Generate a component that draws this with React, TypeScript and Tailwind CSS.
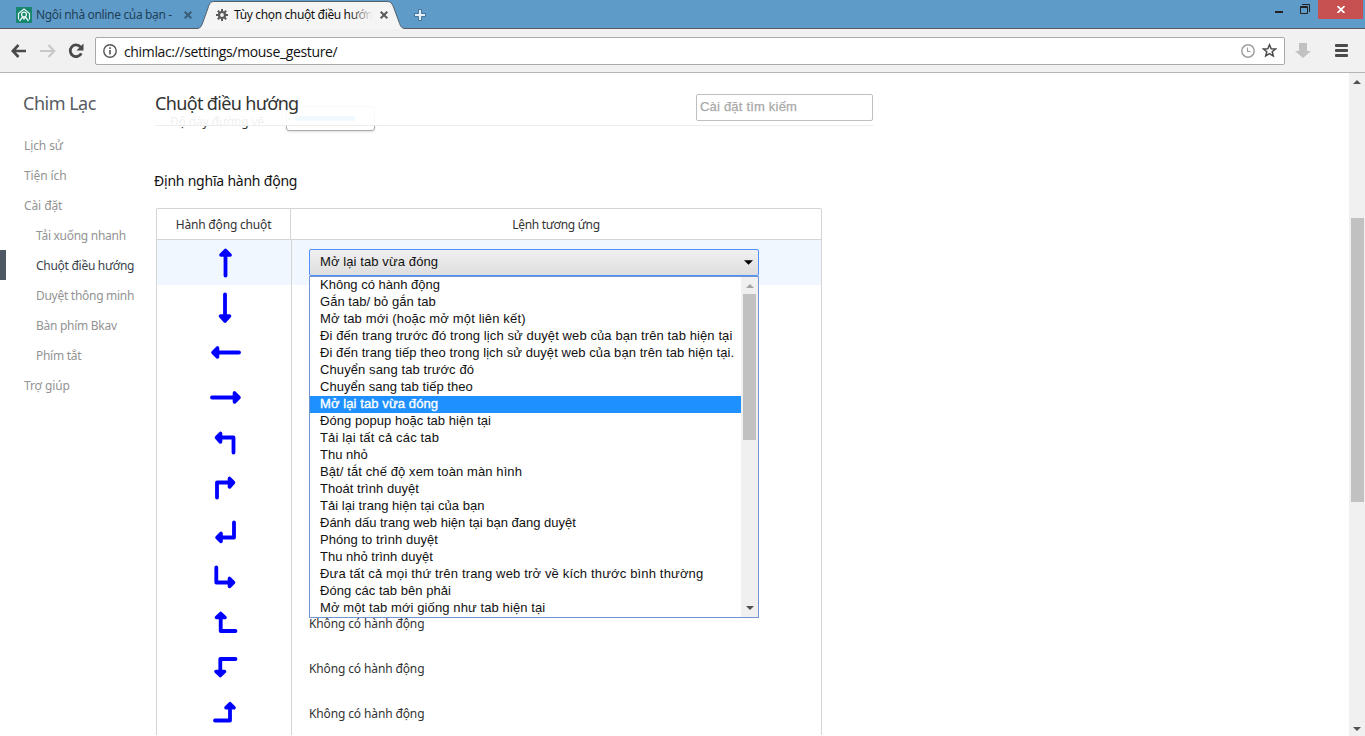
import React from "react";
import clsx from "clsx";

const menuItems = [
  { label: "Lịch sử" },
  { label: "Tiện ích" },
  { label: "Cài đặt" },
  { label: "Tải xuống nhanh", sub: true },
  { label: "Chuột điều hướng", sub: true, active: true },
  { label: "Duyệt thông minh", sub: true },
  { label: "Bàn phím Bkav", sub: true },
  { label: "Phím tắt", sub: true },
  { label: "Trợ giúp" },
];

const commands = [
  { label: "Không có hành động", tracking: "tracking-[0px]" },
  { label: "Gắn tab/ bỏ gắn tab", tracking: "tracking-[0.04px]" },
  { label: "Mở tab mới (hoặc mở một liên kết)", tracking: "tracking-[0.16px]" },
  { label: "Đi đến trang trước đó trong lịch sử duyệt web của bạn trên tab hiện tại", tracking: "tracking-[0.1px]" },
  { label: "Đi đến trang tiếp theo trong lịch sử duyệt web của bạn trên tab hiện tại.", tracking: "tracking-[0.07px]" },
  { label: "Chuyển sang tab trước đó", tracking: "tracking-[0.1px]" },
  { label: "Chuyển sang tab tiếp theo", tracking: "tracking-[0.04px]" },
  { label: "Mở lại tab vừa đóng", tracking: "tracking-[0.1px]" },
  { label: "Đóng popup hoặc tab hiện tại", tracking: "tracking-[0.04px]" },
  { label: "Tải lại tất cả các tab", tracking: "tracking-[0.16px]" },
  { label: "Thu nhỏ", tracking: "tracking-[0px]" },
  { label: "Bật/ tắt chế độ xem toàn màn hình", tracking: "tracking-[0.1px]" },
  { label: "Thoát trình duyệt", tracking: "tracking-[0.04px]" },
  { label: "Tải lại trang hiện tại của bạn", tracking: "tracking-[0.04px]" },
  { label: "Đánh dấu trang web hiện tại bạn đang duyệt", tracking: "tracking-[0px]" },
  { label: "Phóng to trình duyệt", tracking: "tracking-[0.04px]" },
  { label: "Thu nhỏ trình duyệt", tracking: "tracking-[0px]" },
  { label: "Đưa tất cả mọi thứ trên trang web trở về kích thước bình thường", tracking: "tracking-[0.16px]" },
  { label: "Đóng các tab bên phải", tracking: "tracking-[0.04px]" },
  { label: "Mở một tab mới giống như tab hiện tại", tracking: "tracking-[0.1px]" },
];

// line = gesture path, head = arrow head at its end
const gestures = [
  { line: "M68.5 35.5V13", head: "M68.5 10.5L73 15H64Z" },
  { line: "M68 9.5V33", head: "M68 36L63.5 31H72.5Z" },
  { line: "M82 22.5H57", head: "M56 22.5L60.5 18V27Z" },
  { line: "M55 22.5H81", head: "M82 22.5L77.5 18V27Z" },
  { line: "M76.5 32.5V17.5H61", head: "M59.5 17.5L63.5 13.5V22Z" },
  { line: "M60 32.5V17.5H75", head: "M76.5 17.5L72.5 13.5V22Z" },
  { line: "M77 12.5V27.5H62", head: "M60 27.5L64 23.5V31.5Z" },
  { line: "M59.3 12.5V27.5H75", head: "M76.5 27.5L72.5 23.5V31.5Z" },
  { line: "M78.5 31H63.7V16", head: "M63.7 13.5L68 17.5H59.5Z", label: "Không có hành động" },
  { line: "M78.5 14H63.3V28", head: "M63.3 30.5L59 26.5H67.5Z", label: "Không có hành động" },
  { line: "M58 30.5H73V16", head: "M73 13.7L77 17.7H69Z", label: "Không có hành động" },
];

function Triangle({ up, className }: { up?: boolean; className?: string }) {
  return (
    <svg width="8" height="4" viewBox="0 0 8 4" className={className} fill="currentColor">
      <path d={up ? "M0 4L4 0L8 4Z" : "M0 0H8L4 4Z"} />
    </svg>
  );
}

function CloseIcon({ className }: { className?: string }) {
  return (
    <svg width="8" height="8" viewBox="0 0 8 8" className={className} stroke="currentColor" strokeWidth="2">
      <path d="M0.7 0.7L7.3 7.3M7.3 0.7L0.7 7.3" />
    </svg>
  );
}

function TabStrip() {
  return (
    <div className="relative flex h-[29px] items-start border-b border-[#555a5e] bg-[#5e9bc8]">
      <div className="flex h-[29px] w-[200px] items-center pl-4">
        <svg width="16" height="16" viewBox="0 0 16 16" className="mt-px shrink-0" fill="none">
          <rect width="16" height="16" rx="1" fill="#17866f" />
          <path d="M2.500 12.500V6.500L8 2L13.500 6.500V12.500" stroke="#e4f5ef" strokeWidth="1.200" />
          <circle cx="8" cy="7.500" r="2.400" stroke="#e4f5ef" strokeWidth="1.300" />
          <path d="M3.500 14L6.500 10L8 12L9.500 10L12.500 14" stroke="#e4f5ef" strokeWidth="1.300" />
        </svg>
        <span className="ml-1 w-[142px] pt-px text-[12px] tracking-[-0.34px] whitespace-nowrap text-[#1f3f58]">
          Ngôi nhà online của bạn -
        </span>
        <CloseIcon className="ml-[6px] shrink-0 text-[#3a5d78]" />
      </div>
      <div className="relative -ml-[3px] flex h-[29px] w-[210px] items-center pl-[19px]">
        <svg width="210" height="28" viewBox="0 0 210 28" className="absolute top-px left-0">
          <path d="M0 28C4 27 4.500 25 6 21L11 7C12.500 2.500 13.500 .5 17 .5H190C194 .5 195 2.500 196.500 6L202 21C203.500 25 204 27 208 28Z" fill="#f5f5f5" />
          <path d="M0 27.500C4 27 4.500 25 6 21L11 7C12.500 2.500 13.500 .5 17 .5H190C194 .5 195 2.500 196.500 6L202 21C203.500 25 204 27 208 27.500" fill="none" stroke="#54616b" />
        </svg>
        <svg width="12" height="12" viewBox="0 0 12 12" className="relative mt-px shrink-0" fill="none" stroke="#5a5a5a">
          <circle cx="6" cy="6" r="3" strokeWidth="2.200" />
          <path d="M6 0V2.200M6 9.800V12M0 6H2.200M9.800 6H12M1.800 1.800L3.300 3.300M8.700 8.700L10.200 10.200M1.800 10.200L3.300 8.700M8.700 3.300L10.200 1.800" strokeWidth="2" />
        </svg>
        <span className="relative ml-[6px] w-[139px] pt-px text-[12px] tracking-[-0.36px] whitespace-nowrap text-[#111]">
          Tùy chọn chuột điều hướn
          <span className="absolute top-0 right-0 h-full w-6 bg-gradient-to-r from-transparent to-[#f5f5f5]" />
        </span>
        <CloseIcon className="relative ml-[7px] shrink-0 text-[#5a5a5a]" />
      </div>
      <svg width="12" height="12" viewBox="0 0 12 12" className="mt-[9px] ml-[7px]">
        <path d="M4.500 .5H7.500V4.500H11.500V7.500H7.500V11.500H4.500V7.500H.5V4.500H4.500Z" fill="#e4eef6" stroke="#43759b" />
      </svg>
      <div className="ml-auto flex">
        <span className="mt-[11px] mr-[17px] h-[2px] w-2 bg-[#222]" />
        <svg width="10" height="10" viewBox="0 0 10 10" className="mt-1 mr-2" fill="none" stroke="#222">
          <path d="M.5 2.500H7.500V9.500H.5ZM0 3.500H8M2 .5H9.500V8" />
        </svg>
        <div className="mr-[2px] flex h-[19px] w-[45px] items-center justify-center bg-[#c75050]">
          <svg width="8" height="7" viewBox="0 0 8 7" stroke="#fff" strokeWidth="1.800">
            <path d="M.5 0L7.500 7M7.500 0L.5 7" />
          </svg>
        </div>
      </div>
    </div>
  );
}

function Toolbar() {
  return (
    <div className="flex h-[44px] items-center border-b border-[#b5b5b5] bg-[#f1f1f1]">
      <svg width="16" height="14" viewBox="0 0 16 14" className="ml-[11px]" fill="none" stroke="#4a4a4a" strokeWidth="2.600">
        <path d="M15 7H2M7.500 1L1.800 7L7.500 13" />
      </svg>
      <svg width="16" height="14" viewBox="0 0 16 14" className="ml-[13px]" fill="none" stroke="#c8c8c8" strokeWidth="2.200">
        <path d="M0 7H14M8.500 1L14.200 7L8.500 13" />
      </svg>
      <svg width="16" height="16" viewBox="0 0 16 16" className="ml-[12px]" fill="none" stroke="#4a4a4a" strokeWidth="2.800">
        <path d="M12.500 4A5.800 5.800 0 1 0 13.300 10.300" />
        <path d="M15.500 .5V7.500H8.500Z" fill="#4a4a4a" stroke="none" />
      </svg>
      <div className="ml-[11px] flex h-7 w-[1190px] items-center rounded-[2px] border border-[#a9a9a9] bg-white">
        <svg width="14" height="14" viewBox="0 0 14 14" className="ml-[7px]" fill="none" stroke="#555" strokeWidth="1.400">
          <circle cx="7" cy="7" r="6.200" />
          <path d="M7 6V10.500M7 3.300V4.900" strokeWidth="1.600" />
        </svg>
        <span className="ml-[7px] pt-px font-['Open_Sans','Noto_Sans',sans-serif] text-[14px] tracking-[-0.35px] text-[#111]">
          chimlac://settings/mouse_gesture/
        </span>
        <svg width="14" height="14" viewBox="0 0 14 14" className="mr-[7px] ml-auto" fill="none" stroke="#a0a0a0" strokeWidth="1.500">
          <circle cx="7" cy="7" r="6.200" />
          <path d="M6.500 3.500V7.500H9.500" strokeWidth="1.200" />
        </svg>
        <svg width="15" height="15" viewBox="0 0 15 15" className="mr-[7px]" fill="none" stroke="#4a4a4a" strokeWidth="1.500">
          <path d="M7.500 1.800L9.200 5.700L13.500 6L10.200 8.800L11.300 13L7.500 10.700L3.700 13L4.800 8.800L1.500 6L5.800 5.700Z" />
        </svg>
      </div>
      <svg width="16" height="15" viewBox="0 0 16 15" className="ml-[10px]" fill="#c1c1c1">
        <path d="M4 0H12V8H16L8 15L0 8H4Z" />
      </svg>
      <div className="ml-6 flex w-[13px] flex-col gap-[2px]">
        <span className="h-[3px] rounded-[1px] bg-[#4a4a4a]" />
        <span className="h-[3px] rounded-[1px] bg-[#4a4a4a]" />
        <span className="h-[3px] rounded-[1px] bg-[#4a4a4a]" />
      </div>
    </div>
  );
}

function Sidebar() {
  return (
    <aside className="w-[154px] shrink-0">
      <h1 className="h-[57px] pt-4 pl-[23px] text-[18px] leading-7 tracking-[-0.5px] text-[#555b61]">Chim Lạc</h1>
      <ul className="text-[12px] text-[#939393]">
        {menuItems.map((item) => (
          <li
            key={item.label}
            className={clsx(
              "flex h-[30px] items-center border-l-[6px] pt-[2px] whitespace-nowrap",
              item.sub ? "pl-[30px] tracking-[-0.28px]" : "pl-[18px] tracking-[-0.1px]",
              item.active ? "border-[#4e5764] text-[#39424b]" : "border-transparent"
            )}
          >
            {item.label}
          </li>
        ))}
      </ul>
    </aside>
  );
}

function CommandSelect() {
  return (
    <div className="relative w-[450px] font-['Liberation_Sans',Arial,sans-serif] text-[13px] text-[#111]">
      <div className="flex h-[27px] items-center justify-between rounded-[2px] border border-[#4d90fe] bg-gradient-to-b from-[#f0f0f0] to-[#dedede] pr-[5px] pb-px pl-[10px]">
        <span className="tracking-[0.1px]">Mở lại tab vừa đóng</span>
        <Triangle className="mt-px h-[5px] w-[9px] text-black" />
      </div>
      <div className="absolute top-[27px] left-0 z-10 flex w-[450px] border border-[#7295d0] bg-white">
        <ul className="h-[340px] flex-1 overflow-hidden">
          {commands.map((command, index) => (
            <li
              key={command.label}
              className={clsx(
                "h-[17px] pl-[10px] leading-[15px] whitespace-nowrap",
                command.tracking,
                index === 7 && "bg-[#1e90ff] text-white [-webkit-text-stroke:0.35px]"
              )}
            >
              {command.label}
            </li>
          ))}
        </ul>
        <div className="flex w-[17px] flex-col items-center bg-[#f0f0f0]">
          <Triangle up className="mt-[7px] mb-[6px] text-[#a3a3a3]" />
          <span className="h-[146px] w-[13px] bg-[#c1c1c1]" />
          <Triangle className="mt-auto mb-[7px] text-[#505050]" />
        </div>
      </div>
    </div>
  );
}

function GestureTable() {
  return (
    <div className="ml-[2px] w-[666px] rounded-t-[2px] border border-b-0 border-[#d5d5d5] text-[12px] text-[#333]">
      <div className="flex h-[31px] items-center border-b border-[#d5d5d5] text-center">
        <div className="flex h-full w-[134px] items-center justify-center border-r border-[#d5d5d5] pt-[2px] tracking-[-0.18px]">
          Hành động chuột
        </div>
        <div className="flex-1 pt-[2px] tracking-[-0.28px]">Lệnh tương ứng</div>
      </div>
      {gestures.map((gesture, index) => (
        <div key={index} className={clsx("flex h-[45px]", index === 0 && "bg-[#f0f7ff]")}>
          <div className="w-[135px] border-r border-[#d5d5d5]">
            <svg width="134" height="45" viewBox="0 0 134 45" fill="#00f" stroke="#00f" strokeLinecap="round" strokeLinejoin="round">
              <path d={gesture.line} fill="none" strokeWidth="3.800" />
              <path d={gesture.head} strokeWidth="3.600" />
            </svg>
          </div>
          <div className="flex flex-1 items-center pl-[17px]">
            {index === 0 ? <CommandSelect /> : <span className="pt-[2px] tracking-[-0.13px]">{gesture.label}</span>}
          </div>
        </div>
      ))}
    </div>
  );
}

export default function App() {
  return (
    <div className="flex h-[736px] w-[1365px] flex-col overflow-hidden bg-white font-['Noto_Sans','Open_Sans',sans-serif]">
      <TabStrip />
      <Toolbar />
      <div className="flex min-h-0 flex-1">
        <Sidebar />
        <main className="relative w-[719px] shrink-0 overflow-hidden">
          {/* row scrolled under the sticky header */}
          <div className="flex h-[58px] items-end">
            <span className="ml-4 w-[116px] text-[12px] leading-[18px] tracking-[-0.13px] text-[#333]">Độ dày đường vẽ</span>
            <div className="flex h-[25px] w-[89px] items-center rounded-[3px] border border-[#aaa] pl-2 shadow-sm">
              <span className="h-[5px] w-[60px] bg-[#4aaee8]" />
            </div>
          </div>
          <header className="absolute top-0 left-px flex h-[53px] w-[718px] items-start justify-between border-b border-[#ededed] bg-white/92">
            <h2 className="pt-4 text-[18px] leading-7 tracking-[-0.65px] text-[#333]">Chuột điều hướng</h2>
            <div className="mt-[21px] flex h-[27px] w-[177px] rounded-[2px] border border-[#bfbfbf] bg-white pt-[2px] pl-[3px] font-['Liberation_Sans',Arial,sans-serif] text-[13px] leading-5 tracking-[0.2px] text-[#a9a9a9] [-webkit-text-stroke:0.25px]">
              Cài đặt tìm kiếm
            </div>
          </header>
          <h3 className="mt-[38px] mb-[15px] h-[24px] text-[14px] leading-6 tracking-[-0.22px] text-[#111]">Định nghĩa hành động</h3>
          <GestureTable />
        </main>
        <div className="ml-auto flex w-4 flex-col items-center bg-[#f0f0f0]">
          <Triangle up className="mt-[7px] text-[#505050]" />
          <span className="mt-[134px] h-[284px] w-[13px] bg-[#c1c1c1]" />
          <Triangle className="mt-auto mb-[5px] text-[#505050]" />
        </div>
      </div>
    </div>
  );
}
